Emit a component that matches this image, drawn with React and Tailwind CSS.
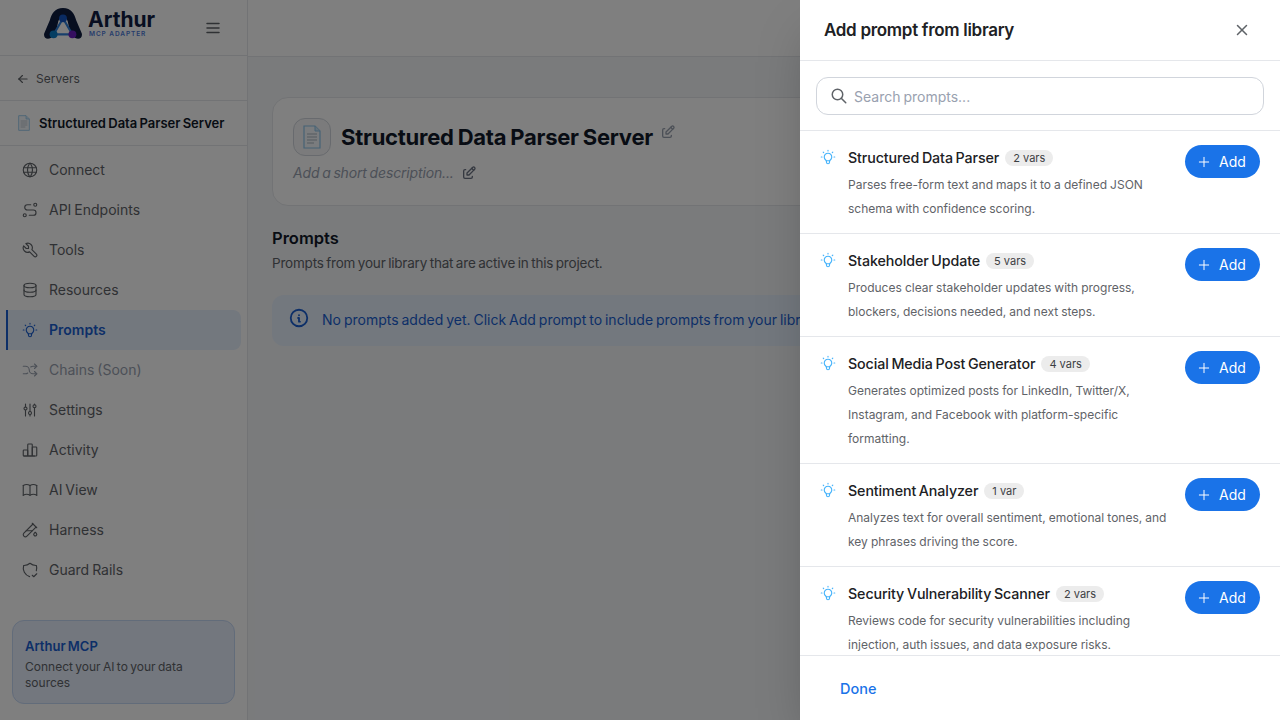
import { TbWorld, TbRoute, TbTool, TbDatabase, TbBulb, TbArrowsShuffle, TbAdjustments, TbChartBar, TbBook, TbTestPipe, TbShieldCheck, TbArrowLeft, TbMenu2, TbEdit, TbInfoCircle, TbSearch, TbX, TbPlus } from 'react-icons/tb';

const nav = [
    { label: "Connect", icon: TbWorld },
    { label: "API Endpoints", icon: TbRoute },
    { label: "Tools", icon: TbTool },
    { label: "Resources", icon: TbDatabase },
    { label: "Prompts", icon: TbBulb, active: true },
    { label: "Chains (Soon)", icon: TbArrowsShuffle, disabled: true },
    { label: "Settings", icon: TbAdjustments },
    { label: "Activity", icon: TbChartBar },
    { label: "AI View", icon: TbBook },
    { label: "Harness", icon: TbTestPipe },
    { label: "Guard Rails", icon: TbShieldCheck },
];

const prompts = [
    { name: "Structured Data Parser", vars: "2 vars", lines: ["Parses free-form text and maps it to a defined JSON", "schema with confidence scoring."] },
    { name: "Stakeholder Update", vars: "5 vars", lines: ["Produces clear stakeholder updates with progress,", "blockers, decisions needed, and next steps."] },
    { name: "Social Media Post Generator", vars: "4 vars", lines: ["Generates optimized posts for LinkedIn, Twitter/X,", "Instagram, and Facebook with platform-specific", "formatting."] },
    { name: "Sentiment Analyzer", vars: "1 var", lines: ["Analyzes text for overall sentiment, emotional tones, and", "key phrases driving the score."] },
    { name: "Security Vulnerability Scanner", vars: "2 vars", lines: ["Reviews code for security vulnerabilities including", "injection, auth issues, and data exposure risks."] },
];

function DocIcon({ className }) {
    return (
        <svg viewBox="0 0 20 24" className={className}>
            <path d="M2 1h11l5 5v17H2z" fill="#f4f8fc" stroke="#8cc4ea" strokeWidth="1.2" />
            <path d="M13 1v5h5" fill="#cfe6f7" stroke="#8cc4ea" strokeWidth="1" />
            <path d="M5 9h10M5 12h10M5 15h10M5 18h7" stroke="#a9b4bf" strokeWidth="1" />
        </svg>
    );
}

function Logo() {
    return (
        <svg viewBox="0 0 40 34" className="w-[38px] h-[32px]">
            <path d="M20 0C11 0 8 6 6 13L0 27c-1 5 3 7 7 5l5-4 3-14c1-3 3-4 5-4s4 1 5 4l3 14 5 4c4 2 8 0 7-5l-6-14C32 6 29 0 20 0z" fill="#0e1c3f" />
            <path d="M20 11L10 28h20z" fill="none" stroke="#2f7fd6" strokeWidth="2.2" />
            <circle cx="20" cy="11" r="4.2" fill="#1456c4" />
            <circle cx="10" cy="28" r="4.2" fill="#0b7cc4" />
            <circle cx="30" cy="28" r="4.2" fill="#6a1fc0" />
        </svg>
    );
}

function Sidebar() {
    return (
        <aside className="w-[248px] shrink-0 h-full bg-white border-r border-gray-200 flex flex-col">
            <div className="h-[56px] shrink-0 border-b border-gray-200 flex items-center pl-[44px] pr-[25px] justify-between pb-[8px]">
                <div className="flex items-center gap-[6px]">
                    <Logo />
                    <div className="flex flex-col pt-[2px]">
                        <span className="text-[21px] leading-[20px] font-bold text-[#101d42]">Arthur</span>
                        <span className="text-[6.5px] leading-[9px] font-semibold tracking-[0.14em] text-[#4d79d8] pl-[1px]">MCP ADAPTER</span>
                    </div>
                </div>
                <TbMenu2 className="w-[18px] h-[18px] mt-[8px] text-[#5f6368]" />
            </div>
            <div className="h-[45px] shrink-0 border-b border-gray-200 flex items-center gap-[6px] pl-[16px] text-[12px] text-[#5f6368] pt-[1px]">
                <TbArrowLeft className="w-[14px] h-[14px]" />
                Servers
            </div>
            <div className="h-[45px] shrink-0 border-b border-gray-200 flex items-center gap-[7px] pl-[16px]">
                <DocIcon className="w-[16px] h-[16px]" />
                <span className="text-[13px] pt-[1px] font-semibold text-gray-900 [word-spacing:-1px]">Structured Data Parser Server</span>
            </div>
            <nav className="flex flex-col pt-[4px] pl-[6px] pr-[6px]">
                {nav.map(item => {
                    const Icon = item.icon;
                    return (
                        <div
                            key={item.label}
                            className={
                                "h-[40px] pb-[1px] flex items-center gap-[10px] text-[14px] rounded-r-lg [word-spacing:-1px] " +
                                (item.active
                                    ? "bg-[#e6f0fd] border-l-2 border-[#1a5fd0] pl-[13px] font-semibold text-[#1a5fd0]"
                                    : item.disabled
                                        ? "pl-[15px] text-gray-400"
                                        : "pl-[15px] text-[#5f6368]")
                            }
                        >
                            <Icon className="w-[18px] h-[18px]" strokeWidth={1.5} />
                            {item.label}
                        </div>
                    );
                })}
            </nav>
            <div className="mt-auto mx-[12px] mb-[16px] h-[84px] rounded-xl border border-[#c5d8f5] bg-[#e6eefc] px-[12px] pt-[15px]">
                <div className="text-[13px] leading-[20px] font-semibold text-[#1a5fd0] [word-spacing:-1px]">Arthur MCP</div>
                <div className="text-[12px] leading-[16px] mt-[3px] text-[#5f6368] [word-spacing:-1px]">Connect your AI to your data sources</div>
            </div>
        </aside>
    );
}

function Main() {
    return (
        <main className="flex-1 h-full bg-[#f4f6f9] flex flex-col min-w-0">
            <div className="h-[57px] shrink-0 bg-white border-b border-gray-200" />
            <div className="px-[24px] pt-[40px]">
                <div className="h-[109px] rounded-2xl border border-gray-200 bg-white px-[20px] pt-[20px]">
                    <div className="flex items-center gap-[10px]">
                        <div className="w-[38px] h-[38px] rounded-xl border border-gray-300 bg-[#f6f7f9] flex items-center justify-center">
                            <DocIcon className="w-[20px] h-[24px]" />
                        </div>
                        <span className="text-[22px] font-bold text-gray-900 tracking-[-0.25px] [word-spacing:-1px]">Structured Data Parser Server</span>
                        <TbEdit className="w-[16px] h-[16px] text-gray-400 -mt-[10px] -ml-[3px]" />
                    </div>
                    <div className="flex items-center gap-[7px] mt-[6px]">
                        <span className="text-[14px] italic text-gray-400 tracking-[-0.15px] [word-spacing:-1px]">Add a short description...</span>
                        <TbEdit className="w-[16px] h-[16px] text-gray-500" />
                    </div>
                </div>
                <div className="text-[16.5px] font-semibold leading-[24px] text-gray-900 mt-[20px]">Prompts</div>
                <div className="text-[13.5px] leading-[20px] mt-[3px] text-[#5f6368] tracking-[-0.2px] [word-spacing:-1px]">Prompts from your library that are active in this project.</div>
                <div className="h-[51px] rounded-xl bg-[#e6f0fd] mt-[22px] flex items-center gap-[12px] pl-[16px] whitespace-nowrap overflow-hidden">
                    <TbInfoCircle className="w-[22px] h-[22px] text-[#1a5fd0] -mt-[6px]" />
                    <span className="text-[14px] pb-[2px] text-[#1a5fd0] [word-spacing:-1px]">No prompts added yet. Click Add prompt to include prompts from your library.</span>
                </div>
            </div>
        </main>
    );
}

function Drawer() {
    return (
        <div className="absolute top-0 right-0 bottom-0 w-[480px] bg-white flex flex-col shadow-2xl">
            <div className="h-[61px] shrink-0 border-b border-gray-200 flex items-center justify-between pl-[24px] pr-[29px]">
                <span className="text-[17px] pt-[2px] font-semibold text-[#202124] tracking-[-0.3px]">Add prompt from library</span>
                <TbX className="w-[18px] h-[18px] text-[#5f6368]" />
            </div>
            <div className="h-[70px] shrink-0 border-b border-gray-200 px-[16px] pt-[16px]">
                <div className="h-[38px] rounded-xl border border-gray-300 flex items-center gap-[6px] pl-[13px]">
                    <TbSearch className="w-[18px] h-[18px] text-[#5f6368]" />
                    <span className="text-[14px] mt-[1px] text-gray-400 [word-spacing:-1px]">Search prompts...</span>
                </div>
            </div>
            <div className="flex-1 min-h-0 overflow-hidden">
                {prompts.map(p => (
                    <div key={p.name} className="flex border-b border-gray-200 pl-[19px] pr-[20px] pt-[15px] pb-[12px]">
                        <TbBulb className="w-[18px] h-[18px] text-[#45b3fb] mt-[2px] shrink-0" strokeWidth={1.5} />
                        <div className="ml-[11px] flex-1 min-w-0">
                            <div className="flex items-center gap-[6px] h-[25px] pb-[2px]">
                                <span className="text-[14.25px] font-medium text-[#202124] tracking-[-0.1px] [word-spacing:-1px]">{p.name}</span>
                                <span className="h-[16px] rounded-full bg-[#ececec] px-[8px] text-[11px] leading-[16px] text-[#3c4043]">{p.vars}</span>
                            </div>
                            <div className="text-[12px] leading-[24px] text-[#5f6368] [word-spacing:-0.3px] pt-[2px]">
                                {p.lines.map(l => <div key={l}>{l}</div>)}
                            </div>
                        </div>
                        <div className="w-[75px] h-[33px] -mt-[1px] shrink-0 rounded-full bg-[#1a73e8] text-white text-[14px] flex items-center pl-[11px] gap-[7px]">
                            <TbPlus className="w-[16px] h-[16px]" strokeWidth={1.5} />
                            Add
                        </div>
                    </div>
                ))}
            </div>
            <div className="h-[65px] shrink-0 border-t border-gray-200 flex items-center pl-[40px] pt-[2px] text-[14.5px] font-medium text-[#1a73e8]">
                Done
            </div>
        </div>
    );
}

export default function App() {
    return (
        <div className="relative w-full h-[720px] overflow-hidden flex font-['Inter',sans-serif]">
            <Sidebar />
            <Main />
            <div className="absolute inset-0 bg-black/50" />
            <Drawer />
        </div>
    );
}
